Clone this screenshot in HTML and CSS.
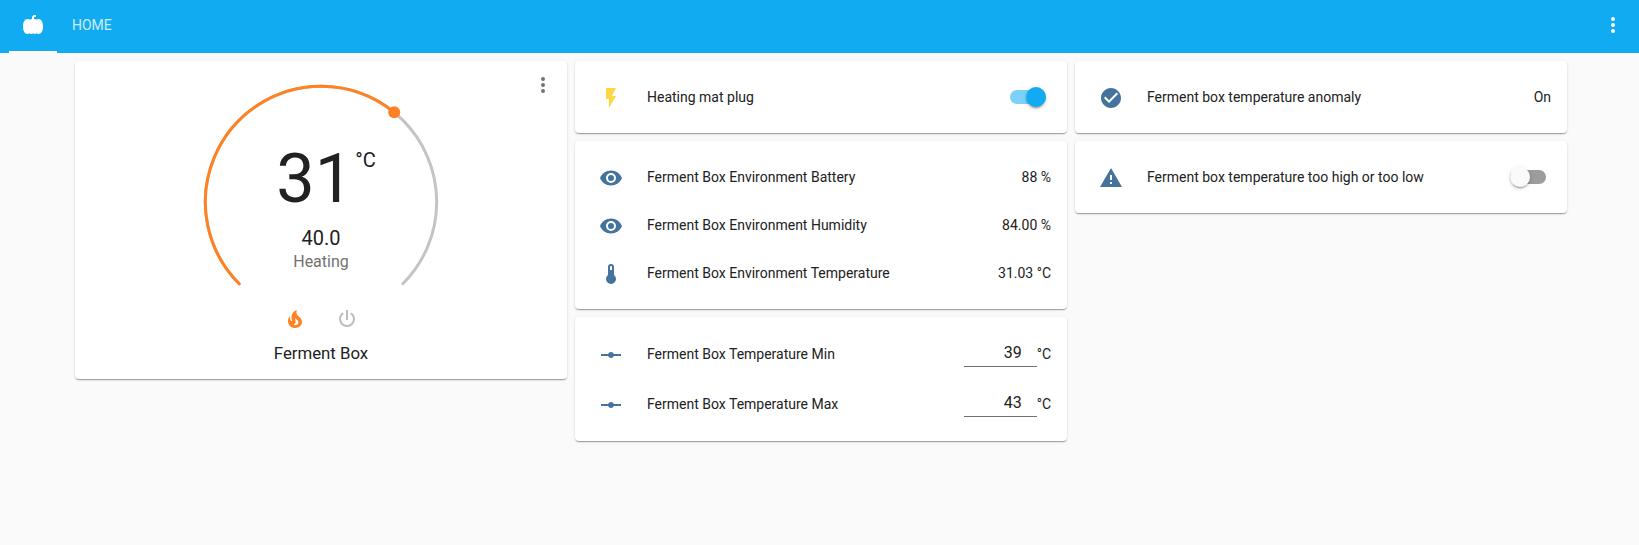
FILE: index.html
```html
<!DOCTYPE html>
<html lang="en">
<head>
<meta charset="utf-8">
<title>Home</title>
<link rel="stylesheet" href="styles.css">
</head>
<body>
<svg class="sprite" aria-hidden="true">
  <symbol id="dots" viewBox="0 0 24 24"><path d="M12,16A2,2 0 0,1 14,18A2,2 0 0,1 12,20A2,2 0 0,1 10,18A2,2 0 0,1 12,16M12,10A2,2 0 0,1 14,12A2,2 0 0,1 12,14A2,2 0 0,1 10,12A2,2 0 0,1 12,10M12,4A2,2 0 0,1 14,6A2,2 0 0,1 12,8A2,2 0 0,1 10,6A2,2 0 0,1 12,4Z"/></symbol>
  <symbol id="eye" viewBox="0 0 24 24"><path d="M12,9A3,3 0 0,0 9,12A3,3 0 0,0 12,15A3,3 0 0,0 15,12A3,3 0 0,0 12,9M12,17A5,5 0 0,1 7,12A5,5 0 0,1 12,7A5,5 0 0,1 17,12A5,5 0 0,1 12,17M12,4.5C7,4.5 2.73,7.61 1,12C2.73,16.39 7,19.5 12,19.5C17,19.5 21.27,16.39 23,12C21.27,7.61 17,4.5 12,4.5Z"/></symbol>
  <symbol id="ray" viewBox="0 0 24 24"><path d="M2,11H9.17C9.58,9.83 10.69,9 12,9C13.31,9 14.42,9.83 14.83,11H22V13H14.83C14.42,14.17 13.31,15 12,15C10.69,15 9.58,14.17 9.17,13H2V11Z"/></symbol>
</svg>

<header class="toolbar">
  <nav class="tabs">
    <div class="tab tab-active">
      <svg class="icon" viewBox="0 0 24 24"><path d="M11 6V4.5C11 3 12 2 13.5 2H15V4H13.7C13.2 4 13 4.2 13 4.7V6C14 6 14.6 6.3 15 6.8C15.6 6.3 16.4 6 17.4 6C20.4 6 22 9.3 22 13.5C22 17.7 20.4 21 17.4 21C16.6 21 15.9 20.8 15.4 20.3C14.9 20.8 14.4 21 13.8 21C13.1 21 12.5 20.8 12 20.3C11.5 20.8 10.9 21 10.2 21C9.6 21 9.1 20.8 8.6 20.3C8.1 20.8 7.4 21 6.6 21C3.6 21 2 17.7 2 13.5C2 9.3 3.6 6 6.6 6C7.6 6 8.4 6.3 9 6.8C9.4 6.3 10 6 11 6Z"/></svg>
    </div>
    <div class="tab tab-text">HOME</div>
  </nav>
  <svg class="icon" viewBox="0 0 24 24"><use href="#dots"/></svg>
</header>

<main class="columns">
  <section class="column">
    <article class="card thermostat">
      <svg class="icon more" viewBox="0 0 24 24"><use href="#dots"/></svg>
      <div class="dial">
        <svg class="ring" viewBox="-125 -125 250 215">
          <path class="track" d="M-81.8 81.8A115.7 115.7 0 1 1 81.8 81.8"/>
          <path class="bar" d="M-81.8 81.8A115.7 115.7 0 0 1 0 -115.7A115.7 115.7 0 0 1 73 -89.8"/>
          <circle class="handle" cx="73.2" cy="-89.8" r="6"/>
        </svg>
        <div class="readout">
          <div class="current">31<span class="unit">°C</span></div>
          <div class="setpoint">40.0</div>
          <div class="action">Heating</div>
        </div>
      </div>
      <div class="modes">
        <svg class="icon heat" viewBox="0 0 24 24"><path d="M17.66 11.2C17.43 10.9 17.15 10.64 16.89 10.38C16.22 9.78 15.46 9.35 14.82 8.72C13.33 7.26 13 4.85 13.95 3C13 3.23 12.17 3.75 11.46 4.32C8.87 6.4 7.85 10.07 9.07 13.22C9.11 13.32 9.15 13.42 9.15 13.55C9.15 13.77 9 13.97 8.8 14.05C8.57 14.15 8.33 14.09 8.14 13.93C8.08 13.88 8.04 13.83 8 13.76C6.87 12.33 6.69 10.28 7.45 8.64C5.78 10 4.87 12.3 5 14.47C5.06 14.97 5.12 15.47 5.29 15.97C5.43 16.57 5.7 17.17 6 17.7C7.08 19.43 8.95 20.67 10.96 20.92C13.1 21.19 15.39 20.8 17.03 19.32C18.86 17.66 19.5 15 18.56 12.72L18.43 12.46C18.22 12 17.66 11.2 17.66 11.2M14.5 17.5C14.22 17.74 13.76 18 13.4 18.1C12.28 18.5 11.16 17.94 10.5 17.28C11.69 17 12.4 16.12 12.61 15.23C12.78 14.43 12.46 13.77 12.33 13C12.21 12.26 12.23 11.63 12.5 10.94C12.69 11.32 12.89 11.7 13.13 12C13.9 13 15.11 13.44 15.37 14.8C15.41 14.94 15.43 15.08 15.43 15.23C15.46 16.05 15.1 16.95 14.5 17.5Z"/></svg>
        <svg class="icon off" viewBox="0 0 24 24"><path d="M16.56,5.44L15.11,6.89C16.84,7.94 18,9.83 18,12A6,6 0 0,1 12,18A6,6 0 0,1 6,12C6,9.83 7.16,7.94 8.88,6.88L7.44,5.44C5.36,6.88 4,9.28 4,12A8,8 0 0,0 12,20A8,8 0 0,0 20,12C20,9.28 18.64,6.88 16.56,5.44M13,3H11V13H13"/></svg>
      </div>
      <div class="name">Ferment Box</div>
    </article>
  </section>

  <section class="column">
    <article class="card">
      <div class="row">
        <svg class="icon flash" viewBox="0 0 24 24"><path d="M7,2V13H10V22L17,10H13L17,2H7Z"/></svg>
        <span class="label">Heating mat plug</span>
        <span class="switch on"><span class="thumb"></span></span>
      </div>
    </article>
    <article class="card">
      <div class="row">
        <svg class="icon" viewBox="0 0 24 24"><use href="#eye"/></svg>
        <span class="label">Ferment Box Environment Battery</span>
        <span class="value">88 %</span>
      </div>
      <div class="row">
        <svg class="icon" viewBox="0 0 24 24"><use href="#eye"/></svg>
        <span class="label">Ferment Box Environment Humidity</span>
        <span class="value">84.00 %</span>
      </div>
      <div class="row">
        <svg class="icon" viewBox="0 0 24 24"><path d="M15 13V5A3 3 0 0 0 9 5V13A5 5 0 1 0 15 13M12 4A1 1 0 0 1 13 5V8H11V5A1 1 0 0 1 12 4Z"/></svg>
        <span class="label">Ferment Box Environment Temperature</span>
        <span class="value">31.03 °C</span>
      </div>
    </article>
    <article class="card">
      <div class="row row-input">
        <svg class="icon" viewBox="0 0 24 24"><use href="#ray"/></svg>
        <span class="label">Ferment Box Temperature Min</span>
        <span class="field">39</span><span class="value">°C</span>
      </div>
      <div class="row row-input">
        <svg class="icon" viewBox="0 0 24 24"><use href="#ray"/></svg>
        <span class="label">Ferment Box Temperature Max</span>
        <span class="field">43</span><span class="value">°C</span>
      </div>
    </article>
  </section>

  <section class="column">
    <article class="card">
      <div class="row">
        <svg class="icon" viewBox="0 0 24 24"><path d="M12 2C6.5 2 2 6.5 2 12S6.5 22 12 22 22 17.5 22 12 17.5 2 12 2M10 17L5 12L6.41 10.59L10 14.17L17.59 6.58L19 8L10 17Z"/></svg>
        <span class="label">Ferment box temperature anomaly</span>
        <span class="value">On</span>
      </div>
    </article>
    <article class="card">
      <div class="row">
        <svg class="icon" viewBox="0 0 24 24"><path d="M13 14H11V9H13M13 18H11V16H13M1 21H23L12 2L1 21Z"/></svg>
        <span class="label">Ferment box temperature too high or too low</span>
        <span class="switch"><span class="thumb"></span></span>
      </div>
    </article>
  </section>
</main>
</body>
</html>
```

FILE: styles.css
```css
* { box-sizing: border-box; }

body {
  margin: 0;
  min-height: 100vh;
  background: #fafafa;
  color: #212121;
  font: 14px/20px Roboto, sans-serif;
}

.sprite { display: none; }

.icon {
  width: 24px;
  height: 24px;
  flex: none;
  display: block;
  fill: currentColor;
}

.toolbar {
  height: 53px;
  padding: 0 14px 0 9px;
  display: flex;
  justify-content: space-between;
  background: #10abf1;
  color: #fff;
}

.toolbar > .icon { margin-top: 13px; }

.tabs { display: flex; }

.tab { height: 53px; }

.tab-active {
  width: 48px;
  padding: 13px 12px 0;
  border-bottom: 2px solid #fff;
}

.tab-text {
  padding: 15px 15px 0;
  color: rgba(255, 255, 255, .8);
}

.columns {
  display: flex;
  gap: 8px;
  padding: 8px 72px 8px 75px;
}

.column {
  flex: 1;
  display: flex;
  flex-direction: column;
  gap: 8px;
}

.card {
  padding: 16px;
  display: flex;
  flex-direction: column;
  gap: 8px;
  background: #fff;
  border-radius: 4px;
  box-shadow: 0 2px 1px -1px rgba(0, 0, 0, .2), 0 1px 1px 0 rgba(0, 0, 0, .14), 0 1px 3px 0 rgba(0, 0, 0, .12);
}

.row {
  height: 40px;
  display: flex;
  align-items: center;
}

.row-input { height: 42px; }

.row .icon {
  margin: 2px 24px 0 8px;
  color: #44739e;
}

.row .flash { color: #fdd744; }

.label { flex: 1; }

.switch {
  width: 36px;
  height: 14px;
  margin-right: 5px;
  display: flex;
  align-items: center;
  border-radius: 7px;
  background: #9c9c9c;
}

.thumb {
  width: 20px;
  height: 20px;
  flex: none;
  border-radius: 50%;
  background: #fafafa;
  box-shadow: 0 3px 1px -2px rgba(0, 0, 0, .2), 0 2px 2px 0 rgba(0, 0, 0, .14), 0 1px 5px 0 rgba(0, 0, 0, .12);
}

.switch.on {
  justify-content: flex-end;
  background: #7bd1f7;
}

.on .thumb { background: #10abf1; }

.field {
  width: 73px;
  height: 28px;
  margin-bottom: 2px;
  padding: 4px 15px 0 0;
  border-bottom: 1px solid #727272;
  font-size: 16px;
  text-align: right;
}

.thermostat {
  position: relative;
  height: 318px;
  padding: 16px 0 0;
  gap: 0;
  align-items: center;
}

.more {
  position: absolute;
  top: 12px;
  right: 12px;
  color: #727272;
}

.dial {
  display: grid;
  width: 250px;
  height: 215px;
}

.ring, .readout { grid-area: 1 / 1; }

.ring { width: 250px; height: 215px; }

.track, .bar {
  fill: none;
  stroke: #c4c4c4;
  stroke-width: 3;
  stroke-linecap: round;
}

.bar { stroke: #ff8121; }

.handle { fill: #ff8121; }

.readout {
  padding-top: 62px;
  display: flex;
  flex-direction: column;
  align-items: center;
}

.current {
  display: flex;
  height: 80px;
  padding-left: 10px;
  font-size: 68.5px;
  line-height: 80px;
}

.unit {
  margin: 9px 0 0 2px;
  font-size: 20px;
  line-height: 24px;
}

.setpoint {
  margin-top: 7px;
  font-size: 20px;
  line-height: 24px;
}

.action {
  color: #727272;
  font-size: 16px;
  line-height: 24px;
}

.modes {
  display: flex;
  gap: 28px;
  margin-top: 15px;
}

.heat { color: #ff8121; }

.off { color: #bdbdbd; }

.name {
  margin-top: 10px;
  font-size: 16.8px;
  line-height: 24px;
}
```
